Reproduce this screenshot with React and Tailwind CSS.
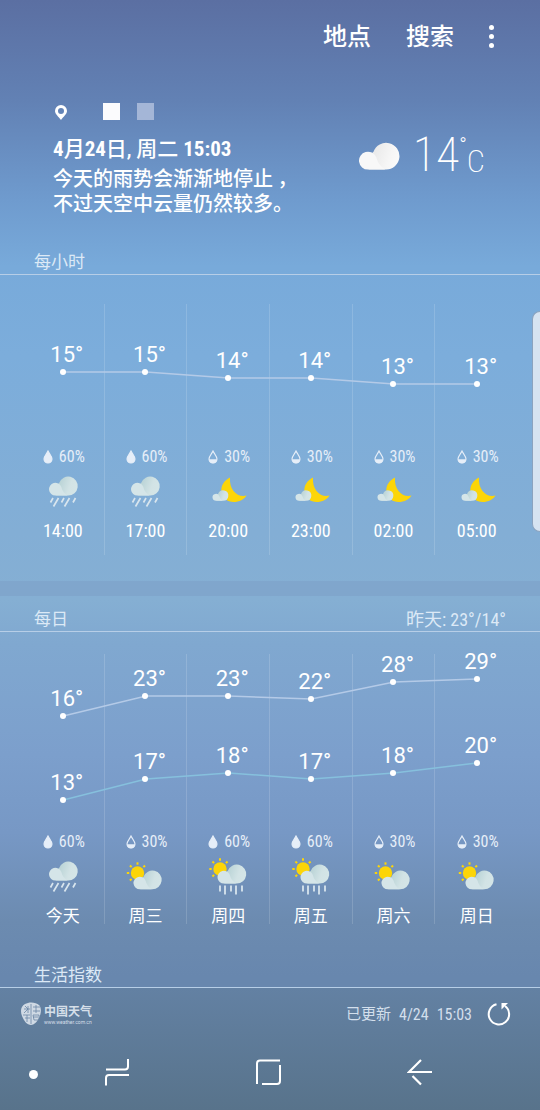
import React from "react";

const HOURLY = [
  { label: "14:00", temps: [15], ys: [68], rain: 60, icon: "rain" },
  { label: "17:00", temps: [15], ys: [68], rain: 60, icon: "rain" },
  { label: "20:00", temps: [14], ys: [74], rain: 30, icon: "night" },
  { label: "23:00", temps: [14], ys: [74], rain: 30, icon: "night" },
  { label: "02:00", temps: [13], ys: [80], rain: 30, icon: "night" },
  { label: "05:00", temps: [13], ys: [80], rain: 30, icon: "night" },
];

const DAILY = [
  { label: "今天", temps: [16, 13], ys: [62, 146], rain: 60, icon: "rain" },
  { label: "周三", temps: [23, 17], ys: [42, 125], rain: 30, icon: "sun" },
  { label: "周四", temps: [23, 18], ys: [42, 119], rain: 60, icon: "sunrain" },
  { label: "周五", temps: [22, 17], ys: [45, 125], rain: 60, icon: "sunrain" },
  { label: "周六", temps: [28, 18], ys: [28, 119], rain: 30, icon: "sun" },
  { label: "周日", temps: [29, 20], ys: [25, 109], rain: 30, icon: "sun" },
];

function Drop({ full }) {
  return (
    <svg width="10" height="14" viewBox="0 0 10 14" aria-hidden="true">
      <path
        d="M5 1C4 3.4 1 6.4 1 9a4 4 0 0 0 8 0C9 6.4 6 3.4 5 1Z"
        fill={full ? "#e6eef8" : "none"}
        stroke="#e6eef8"
        strokeWidth="1.1"
      />
      {!full && <path d="M1 9.2h8a4 4 0 0 1-8 0Z" fill="#e6eef8" />}
    </svg>
  );
}

function Gradients() {
  return (
    <svg className="absolute size-0" aria-hidden="true">
      <defs>
        <linearGradient id="puff" x1="0" y1="0.3" x2="1" y2="0.6">
          <stop offset="0" stopColor="#b3cfd2" />
          <stop offset="0.65" stopColor="#d2e3e5" />
          <stop offset="1" stopColor="#d4e5e7" />
        </linearGradient>
        <linearGradient id="white" x1="0" y1="0.3" x2="1" y2="0.6">
          <stop offset="0" stopColor="#e6e6e6" />
          <stop offset="0.7" stopColor="#f6f6f6" />
          <stop offset="1" stopColor="#fafafa" />
        </linearGradient>
      </defs>
    </svg>
  );
}

function Cloud({ x, y, scale, fill = "url(#puff)", front = "#d5e5e8" }) {
  return (
    <g transform={`translate(${x} ${y}) scale(${scale})`}>
      <path d="M7 20V12Q10 7 10.500 7A9.700 9.700 0 1 1 19.500 20Z" fill={fill} />
      <path d="M6.500 20a6.500 6.500 0 1 1 6-9q1.500 6 6.500 9Z" fill={front} />
    </g>
  );
}

function Sun({ x, y }) {
  return (
    <g transform={`translate(${x} ${y})`}>
      <circle r="6.700" fill="#fcd508" />
      {[90, 135, 180, 225, 270, 315].map((a) => (
        <path key={a} d="M8.300 0h2.400" stroke="#fcd508" strokeWidth="2" transform={`rotate(${a})`} />
      ))}
    </g>
  );
}

function WeatherIcon({ kind }) {
  return (
    <svg className="mt-1" width="42" height="40" viewBox="0 0 42 40" aria-hidden="true">
      {kind === "rain" && (
        <>
          <Cloud x={7} y={5} scale={0.98} />
          <path
            d="M11 27l-2.500 4.500M16.500 27l-5 8.500M22 27l-2.500 4.500M27.500 27l-5 8.500M33.500 27l-2.500 4.500"
            stroke="#d8e5ee"
            strokeWidth="1.700"
          />
        </>
      )}
      {kind === "night" && (
        <>
          <path d="M23 6.500C17 9.500 13.500 15 14.500 21c1 6 6 10 12 10 6 0 10.500-2.500 13-6.500C31 27 22 19.500 23 6.500Z" fill="#fcd508" />
          <Cloud x={5.5} y={19} scale={0.54} />
        </>
      )}
      {kind === "sun" && (
        <>
          <Sun x={13.5} y={17} />
          <Cloud x={9.5} y={14} scale={0.96} />
        </>
      )}
      {kind === "sunrain" && (
        <>
          <Sun x={13} y={13} />
          <Cloud x={10.5} y={8} scale={0.98} />
          <path d="M13 29.500v6M18 29.500v9M24 29.500v6M29 29.500v9M35 29.500v6" stroke="#d8e5ee" strokeWidth="1.800" />
        </>
      )}
    </svg>
  );
}

function Forecast({ items, chartClass, labelClass }) {
  const rows = items[0].ys.map((_, i) => i);
  return (
    <div className="relative mx-[22px]">
      <svg
        className="absolute inset-x-0 top-0 h-[160px] w-full"
        viewBox="0 0 600 160"
        preserveAspectRatio="none"
        aria-hidden="true"
      >
        {rows.map((r) => (
          <polyline
            key={r}
            points={items.map((d, i) => `${i * 100 + 50},${d.ys[r]}`).join(" ")}
            fill="none"
            stroke={r === 0 ? "#b4cae7" : "#86c0dd"}
            strokeWidth="1.500"
            vectorEffect="non-scaling-stroke"
          />
        ))}
      </svg>
      <ul className="grid grid-cols-6 divide-x divide-white/15">
        {items.map((d) => (
          <li key={d.label} className="flex flex-col items-center">
            <div className={`relative w-full ${chartClass}`}>
              {d.temps.map((t, r) => (
                <div
                  key={r}
                  className="absolute inset-x-0 flex flex-col items-center"
                  style={{ top: d.ys[r] - 31 }}
                >
                  <span className="h-7 pl-2 font-['Roboto',sans-serif] text-[22px] leading-7">{t}°</span>
                  <span className="size-1.5 rounded-full bg-white" />
                </div>
              ))}
            </div>
            <div className="flex h-5 items-center gap-1.5 pl-0.5 text-base text-[#e6eef8]">
              <Drop full={d.rain > 50} />
              <span>{d.rain}%</span>
            </div>
            <WeatherIcon kind={d.icon} />
            <span className={`mt-3 leading-4 ${labelClass}`}>{d.label}</span>
          </li>
        ))}
      </ul>
    </div>
  );
}

function SectionTitle({ title, children }) {
  return (
    <div className="flex h-[26px] items-start justify-between border-b border-[#b7cee7] px-[34px] text-[17px] leading-[27px] text-[#dce9f6]">
      <h2>{title}</h2>
      {children}
    </div>
  );
}

export default function App() {
  return (
    <div className="relative flex min-h-screen flex-col overflow-hidden bg-[linear-gradient(180deg,#5b6fa2_0%,#6281b4_9%,#6f9bce_18%,#78aada_24%,#7caddb_32%,#83aed5_48%,#85afd3_54%,#80a8d0_58%,#7c9fcc_68%,#7798c5_75%,#6c8bb0_83%,#6887ae_88%)] font-['Roboto_Condensed','Roboto','Noto_Sans_CJK_SC',sans-serif] text-white">
      <Gradients />
      <header className="flex h-[72px] items-center justify-end gap-[35px] pt-px pr-[46px] text-2xl font-medium">
        <button type="button">地点</button>
        <button type="button">搜索</button>
        <button type="button" aria-label="更多" className="flex flex-col items-center gap-1">
          <span className="size-[5px] rounded-full bg-white" />
          <span className="size-[5px] rounded-full bg-white" />
          <span className="size-[5px] rounded-full bg-white" />
        </button>
      </header>

      <main className="flex flex-1 flex-col">
        <section className="flex items-start justify-between pt-[31px] pr-[55px] pl-[53px]">
          <div>
            <div className="flex h-[17px] items-center">
              <svg width="16" height="17" viewBox="0 0 16 17" aria-hidden="true">
                <path fillRule="evenodd" d="M8 2a6 6 0 0 1 6 6c0 3-3.500 5.500-6 9-2.500-3.500-6-6-6-9a6 6 0 0 1 6-6Zm0 3a3 3 0 1 0 0 6 3 3 0 0 0 0-6Z" fill="#fff" />
              </svg>
              <span className="ml-[34px] size-[17px] bg-[#fbfbfd]" />
              <span className="ml-[17px] size-[17px] bg-[#a4b6d7]" />
            </div>
            <p className="mt-4 text-[21px] leading-[27px] font-medium">
              <b>4</b>月<b>24</b>日, 周二 <b>15:03</b>
            </p>
            <p className="mt-1 text-xl leading-[25px] font-medium">
              今天的雨势会渐渐地停止 ，
              <br />
              不过天空中云量仍然较多。
            </p>
          </div>
          <div className="flex items-start gap-3 pt-[30px]">
            <svg className="mt-[9px]" width="42" height="30" viewBox="0 0 42 30" aria-hidden="true">
              <Cloud x={0} y={0} scale={1.38} fill="url(#white)" front="#f8f8f8" />
            </svg>
            <p className="flex text-5xl leading-[44px] font-extralight">
              <span>14</span>
              <span className="text-xl leading-6 font-light">°</span>
              <span className="text-[32px] leading-[56px]">C</span>
            </p>
          </div>
        </section>

        <section className="mt-8">
          <SectionTitle title="每小时" />
          <div className="pt-[29px] pb-[26px]">
            <Forecast items={HOURLY} chartClass="h-[143px]" labelClass="mb-4 text-lg" />
          </div>
        </section>

        <div className="h-[15px] bg-[#7da0c8]/60" />

        <section className="pt-2.5">
          <SectionTitle title="每日">
            <p className="text-lg leading-[27px]">昨天: 23°/14°</p>
          </SectionTitle>
          <div className="pt-[22px]">
            <Forecast items={DAILY} chartClass="h-[178px]" labelClass="text-[17px]" />
          </div>
        </section>

        <section className="mt-auto">
          <SectionTitle title="生活指数" />
        </section>
      </main>

      <footer className="bg-linear-to-b from-[#6381a3] to-[#58738b]">
        <div className="flex h-[52px] items-center justify-between pr-7 pl-5">
          <a href="#weather" className="flex items-center gap-0.5 text-[#d5dfe9]">
            <svg width="22" height="24" viewBox="0 0 22 24" aria-hidden="true">
              <path d="M5 2C9-.5 16 0 19 3c3 3 2 9 0 13-2 4-5 7-8 7-4 0-7-4-9-9C0 9 1 4 5 2Z" fill="#cfd9e4" />
              <path d="M5 4l3 3-4 4M8 4v7M11 2v20M13 5h7M13 9h7M16 3v8M3 13h7M5 16h5M7 13v7M13 13h6v5h-5zM13 15h5M4 7h6" fill="none" stroke="#6b87a5" strokeWidth="0.800" />
            </svg>
            <span className="flex flex-col">
              <span className="text-xs leading-4 font-bold">中国天气</span>
              <span className="font-['Roboto',sans-serif] text-[5px] leading-[5px]">www.weather.com.cn</span>
            </span>
          </a>
          <div className="flex items-center gap-3.5 text-base text-[#d3dfec]">
            <p className="flex gap-2 pt-0.5">
              <span className="text-[15px]">已更新</span>
              <span>4/24</span>
              <span>15:03</span>
            </p>
            <button type="button" aria-label="刷新">
              <svg width="26" height="26" viewBox="0 0 26 26" fill="none" stroke="#fff" strokeWidth="2" aria-hidden="true">
                <path d="M10.500 3.300A10.200 10.200 0 1 0 19 5" />
                <path d="M15.500 2h6.500L15.500 8.500Z" fill="#fff" stroke="none" />
              </svg>
            </button>
          </div>
        </div>
        <nav className="flex h-[70px] items-center pb-1.5 pl-[29px]">
          <span className="mt-1 size-[9px] rounded-full bg-white" />
          <button type="button" aria-label="最近" className="ml-[66px]">
            <svg width="26" height="28" viewBox="0 0 26 28" fill="none" stroke="#fff" strokeWidth="2" aria-hidden="true">
              <path d="M2 11.500H21q3 0 3-3V1M25 17H5q-3 0-3 3v7.500" />
            </svg>
          </button>
          <button type="button" aria-label="主页" className="ml-[125px]">
            <svg width="26" height="28" viewBox="0 0 26 28" fill="none" stroke="#fff" strokeWidth="2" aria-hidden="true">
              <path d="M2 26V5.500q0-3 3-3H25M25 7V23q0 3-3 3H7" />
            </svg>
          </button>
          <button type="button" aria-label="返回" className="ml-[126px]">
            <svg width="26" height="28" viewBox="0 0 26 28" fill="none" stroke="#fff" strokeWidth="2.200" aria-hidden="true">
              <path d="M25 14H2L14 2M5.500 18L14 26.500" />
            </svg>
          </button>
        </nav>
      </footer>

      <aside className="absolute top-[311px] right-0 h-[221px] w-2 rounded-l-lg border border-r-0 border-[#8ba3bf] bg-[#d6e3f1]" />
    </div>
  );
}
